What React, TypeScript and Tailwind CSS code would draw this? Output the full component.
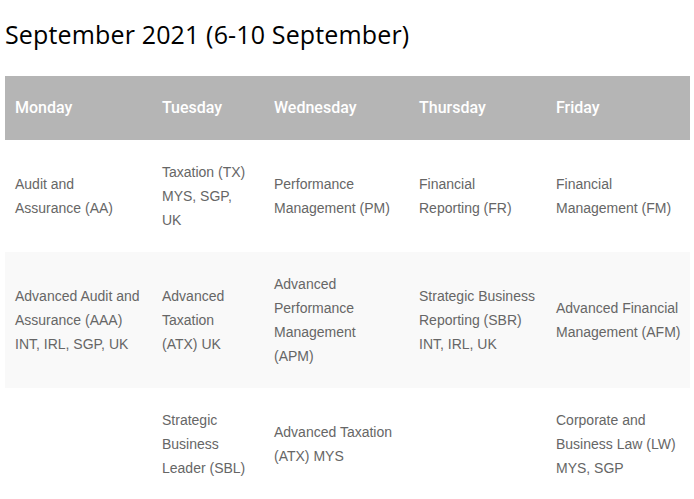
import React from "react";

const rows: string[][][] = [
  [
    ["Audit and Assurance (AA)"],
    ["Taxation (TX)", "MYS, SGP, UK"],
    ["Performance Management (PM)"],
    ["Financial Reporting (FR)"],
    ["Financial Management (FM)"],
  ],
  [
    ["Advanced Audit and Assurance (AAA)", "INT, IRL, SGP, UK"],
    ["Advanced Taxation (ATX) UK"],
    ["Advanced Performance Management (APM)"],
    ["Strategic Business Reporting (SBR)", "INT, IRL, UK"],
    ["Advanced Financial Management (AFM)"],
  ],
  [
    [],
    ["Strategic Business Leader (SBL)"],
    ["Advanced Taxation (ATX) MYS"],
    [],
    ["Corporate and Business Law (LW)", "MYS, SGP"],
  ],
];

const days = ["Monday", "Tuesday", "Wednesday", "Thursday", "Friday"];

const colPad = ["pr-[11px]", "pr-[15px]", "pr-[15px]", "pr-[8px]", "pr-[6px]"];

export default function App() {
  return (
    <div className="bg-white w-[694px] h-[499px] overflow-hidden pl-[5px]">
      <h1 className="text-[25px] leading-[32px] tracking-[0.15px] text-black pt-[18px] pb-[26px] font-['Open_Sans',sans-serif]">
        September 2021 (6-10 September)
      </h1>
      <div className="w-[685px] grid grid-cols-[147px_112px_145px_137px_144px]">
        {days.map((d) => (
          <div
            key={d}
            className="bg-[#b5b5b5] text-white h-[64px] flex items-center pl-[10px] text-[16px] font-medium font-['Roboto',sans-serif]"
          >
            {d}
          </div>
        ))}
        {rows.map((row, ri) =>
          row.map((cell, ci) => (
            <div
              key={ri + "-" + ci}
              className={
                (ri === 1
                  ? "flex flex-col justify-center pl-[10px] py-[20px] text-[14px] leading-[24px] text-[#666666] bg-[#f9f9f9] font-['Liberation_Sans',Arial,sans-serif] "
                  : "flex flex-col justify-center pl-[10px] py-[20px] text-[14px] leading-[24px] text-[#666666] bg-white font-['Liberation_Sans',Arial,sans-serif] ") +
                colPad[ci]
              }
            >
              {cell.map((line, li) => (
                <div key={li}>{line}</div>
              ))}
            </div>
          ))
        )}
      </div>
    </div>
  );
}
